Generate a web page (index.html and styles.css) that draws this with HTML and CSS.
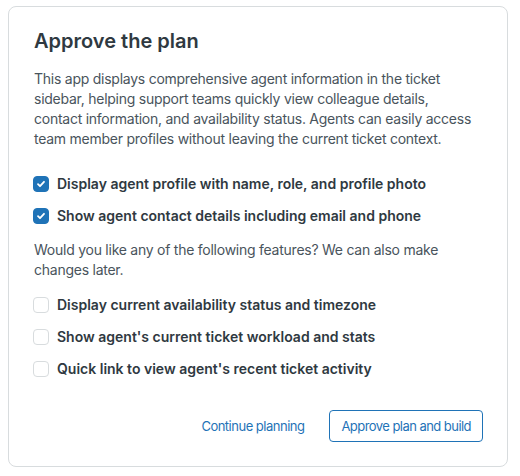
FILE: index.html
```html
<!DOCTYPE html>
<html>
<head>
<meta charset="utf-8">
<link rel="stylesheet" href="styles.css">
</head>
<body>
<div class="card">
  <h1 class="title">Approve the plan</h1>
  <p class="text intro">This app displays comprehensive agent information in the ticket sidebar, helping support teams quickly view colleague details, contact information, and availability status. Agents can easily access team member profiles without leaving the current ticket context.</p>
  <ul class="list">
    <li class="item"><span class="box checked"><svg viewBox="0 0 12 12" width="12" height="12"><path d="M3 6.2l2 2 4-4.4" fill="none" stroke="#fff" stroke-width="1.8" stroke-linecap="round" stroke-linejoin="round"/></svg></span><span class="label">Display agent profile with name, role, and profile photo</span></li>
    <li class="item"><span class="box checked"><svg viewBox="0 0 12 12" width="12" height="12"><path d="M3 6.2l2 2 4-4.4" fill="none" stroke="#fff" stroke-width="1.8" stroke-linecap="round" stroke-linejoin="round"/></svg></span><span class="label">Show agent contact details including email and phone</span></li>
  </ul>
  <p class="text question">Would you like any of the following features? We can also make changes later.</p>
  <ul class="list list-optional">
    <li class="item"><span class="box"></span><span class="label">Display current availability status and timezone</span></li>
    <li class="item"><span class="box"></span><span class="label">Show agent's current ticket workload and stats</span></li>
    <li class="item"><span class="box"></span><span class="label">Quick link to view agent's recent ticket activity</span></li>
  </ul>
  <div class="actions">
    <button class="btn-link">Continue planning</button>
    <button class="btn-outline">Approve plan and build</button>
  </div>
</div>
</body>
</html>
```
FILE: styles.css
```css
html, body {
  margin: 0;
  padding: 0;
  background: #fff;
}
body {
  padding: 6px 12px 9px 8px;
  font-family: Inter, "Noto Sans", sans-serif;
  color: #2f3941;
}
.card {
  width: 500px;
  height: 461px;
  box-sizing: border-box;
  border: 1px solid #d8dcde;
  border-radius: 8px;
  padding: 20px 22px 0 25px;
}
.title {
  margin: 0 0 14px;
  font-size: 20px;
  line-height: 28px;
  font-weight: 600;
  color: #2f3941;
}
.text {
  margin: 0;
  font-size: 14px;
  line-height: 20px;
  letter-spacing: -0.25px;
  color: #49545c;
}
.intro {
  max-width: 444px;
}
.list {
  list-style: none;
  margin: 19px 0 0;
  padding: 0;
}
.list-optional {
  margin-top: 9px;
}
.item {
  display: flex;
  align-items: center;
  height: 32px;
  gap: 8px;
}
.box {
  width: 16px;
  height: 16px;
  margin-left: -1px;
  box-sizing: border-box;
  border: 1px solid #d8dcde;
  border-radius: 4px;
  display: flex;
  align-items: center;
  justify-content: center;
  flex: none;
}
.box.checked {
  background: #1f73b7;
  border-color: #1f73b7;
}
.label {
  font-size: 14px;
  line-height: 20px;
  font-weight: 600;
  color: #2f3941;
}
.question {
  margin-top: 8px;
}
.actions {
  display: flex;
  justify-content: flex-end;
  align-items: center;
  gap: 25px;
  margin-top: 25px;
  padding-right: 2px;
}
.btn-link {
  background: none;
  border: none;
  padding: 0;
  font-family: inherit;
  font-size: 13px;
  letter-spacing: -0.5px;
  color: #1f73b7;
}
.btn-outline {
  font-family: inherit;
  font-size: 13px;
  letter-spacing: -0.55px;
  color: #1f73b7;
  background: #fff;
  border: 1px solid #1f73b7;
  border-radius: 4px;
  height: 32px;
  padding: 0 11px;
}
```
